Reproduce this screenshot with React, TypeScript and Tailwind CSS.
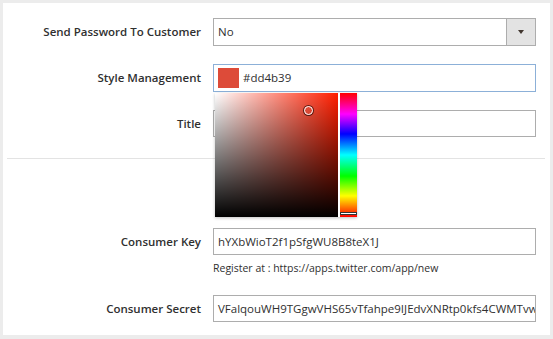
import React from "react";

const labelCls =
  "w-[210px] shrink-0 pr-[12px] text-right text-[11.5px] font-semibold text-[#303030] leading-[27px]";
const inputBase =
  "h-[27px] w-full border border-[#adadad] bg-white text-[11.5px] text-[#303030] leading-[25px] pl-[4px] pr-[3px] overflow-hidden whitespace-nowrap";

function Row({ label, children, className = "" }: { label: string; children: React.ReactNode; className?: string }) {
  return (
    <div className={"flex items-start " + className}>
      <div className={labelCls}>{label}</div>
      <div className="relative flex min-w-0 flex-1 flex-col">{children}</div>
    </div>
  );
}

function Picker() {
  return (
    <div className="absolute left-[2px] top-[29px] z-10 flex h-[124px] w-[142px] bg-white shadow-[0_1px_3px_rgba(0,0,0,0.25)]">
      <div className="relative h-full w-[123px] bg-[rgb(255,30,0)]">
        <div className="absolute inset-0 bg-gradient-to-r from-white to-transparent" />
        <div className="absolute inset-0 bg-gradient-to-b from-transparent to-black" />
        <div className="absolute left-[89px] top-[13px] h-[9px] w-[9px] rounded-full border-[1.5px] border-white shadow-[0_0_0_1px_rgba(0,0,0,0.6)]" />
      </div>
      <div className="relative ml-[2px] h-full w-[17px] bg-[linear-gradient(to_bottom,#f00_0%,#f0f_17%,#00f_33%,#0ff_50%,#0f0_67%,#ff0_83%,#f00_100%)]">
        <div className="absolute bottom-[2px] left-0 right-0 h-[3px] border border-[#333] bg-white" />
      </div>
    </div>
  );
}

export default function App() {
  return (
    <div
      className="h-[339px] w-[553px] overflow-hidden bg-[#ececec] p-[3px] pb-[4px]"
      style={{ fontFamily: '"Open Sans", "Liberation Sans", sans-serif' }}
    >
      <div className="h-full w-full bg-white pt-[15px] pr-[14px]">
        <Row label="Send Password To Customer">
          <div className="flex h-[28px] border border-[#adadad] bg-white">
            <div className="flex-1 pl-[4px] text-[11.5px] leading-[26px] text-[#303030]">No</div>
            <div className="flex w-[29px] items-center justify-center border-l border-[#adadad] bg-[#e3e3e3]">
              <svg width="6" height="4" viewBox="0 0 6 4">
                <path d="M0 0 L6 0 L3 4 Z" fill="#41362f" />
              </svg>
            </div>
          </div>
        </Row>
        <Row label="Style Management" className="mt-[18px]">
          <div className="flex h-[28px] items-center border border-[#8cb0d8] bg-white pl-[4px]">
            <div className="h-[20px] w-[21px] bg-[#dd4b39]" />
            <div className="pl-[4px] text-[11.5px] text-[#303030]">#dd4b39</div>
          </div>
          <Picker />
        </Row>
        <Row label="Title" className="mt-[18px]">
          <div className={inputBase}></div>
        </Row>
        <div className="ml-[4px] mt-[21px] h-px w-[538px] bg-[#e3e3e3]" />
        <Row label="Consumer Key" className="mt-[69px]">
          <div className={inputBase}>hYXbWioT2f1pSfgWU8B8teX1J</div>
          <div className="mt-[5px] text-[10.5px] leading-[16px] text-[#303030]">
            Register at : https://apps.twitter.com/app/new
          </div>
        </Row>
        <Row label="Consumer Secret" className="mt-[19px]">
          <div className={inputBase}>VFalqouWH9TGgwVHS65vTfahpe9IJEdvXNRtp0kfs4CWMTvwK8dL2</div>
        </Row>
      </div>
    </div>
  );
}
